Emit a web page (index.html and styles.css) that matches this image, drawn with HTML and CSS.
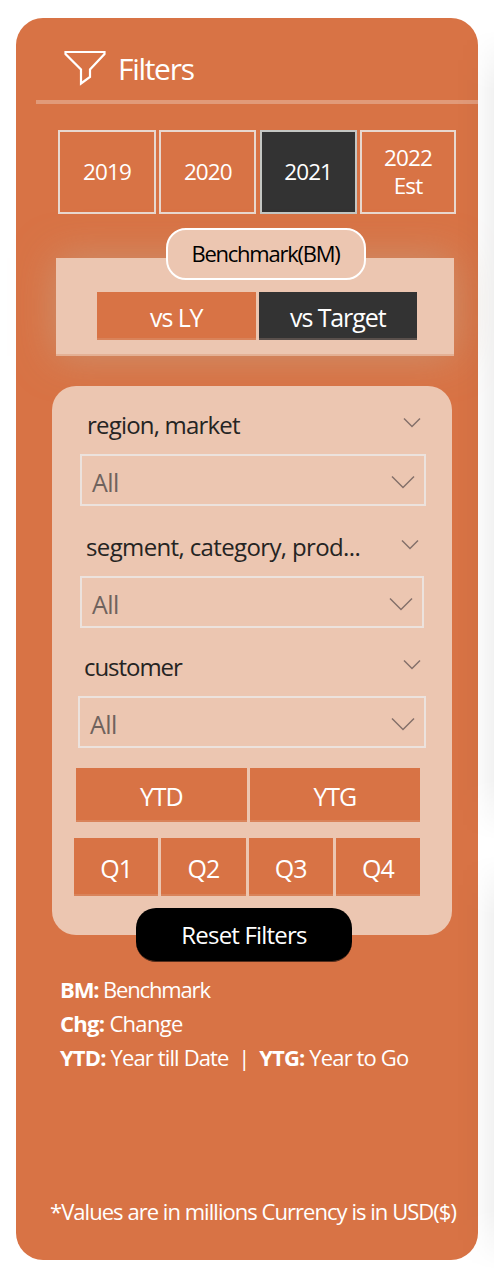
FILE: index.html
```html
<!DOCTYPE html>
<html lang="en">
<head>
<meta charset="utf-8">
<title>Filters</title>
<link rel="stylesheet" href="styles.css">
</head>
<body>
<aside class="panel">
  <header class="head">
    <svg class="funnel" width="44" height="38" viewBox="0 0 44 38"><path d="M2.5 3H41.5V5L27 20.5V28L18 34.5V20.5L2.5 5Z"/></svg>
    <h1 class="title">Filters</h1>
  </header>
  <div class="years">
    <button class="year">2019</button>
    <button class="year">2020</button>
    <button class="year on">2021</button>
    <button class="year">2022<br>Est</button>
  </div>
  <section class="bench">
    <div class="pill"><span>Benchmark(BM)</span></div>
    <div class="pair modes">
      <button class="tile ly">vs LY</button>
      <button class="tile on target">vs Target</button>
    </div>
  </section>
  <section class="card">
    <div class="slicer">
      <div class="label"><span class="region">region, market</span><svg class="chev" width="18" height="11" viewBox="0 0 18 11"><path d="M1 1.5L9 9.5L17 1.5"/></svg></div>
      <div class="select"><span class="all">All</span><svg class="chev" width="26" height="14" viewBox="0 0 26 14"><path d="M2 1.5L13 12.5L24 1.5"/></svg></div>
    </div>
    <div class="slicer second">
      <div class="label"><span class="segment">segment, category, prod...</span><svg class="chev" width="18" height="11" viewBox="0 0 18 11"><path d="M1 1.5L9 9.5L17 1.5"/></svg></div>
      <div class="select"><span class="all">All</span><svg class="chev" width="26" height="14" viewBox="0 0 26 14"><path d="M2 1.5L13 12.5L24 1.5"/></svg></div>
    </div>
    <div class="slicer third">
      <div class="label"><span class="customer">customer</span><svg class="chev" width="18" height="11" viewBox="0 0 18 11"><path d="M1 1.5L9 9.5L17 1.5"/></svg></div>
      <div class="select"><span class="all">All</span><svg class="chev" width="26" height="14" viewBox="0 0 26 14"><path d="M2 1.5L13 12.5L24 1.5"/></svg></div>
    </div>
    <div class="pair periods">
      <button class="tile">YTD</button>
      <button class="tile">YTG</button>
    </div>
    <div class="quarters">
      <button class="tile">Q1</button>
      <button class="tile">Q2</button>
      <button class="tile">Q3</button>
      <button class="tile">Q4</button>
    </div>
    <button class="reset">Reset Filters</button>
  </section>
  <div class="legend">
    <p class="bm"><b>BM:</b> Benchmark</p>
    <p><b>Chg:</b> Change</p>
    <p class="long"><b>YTD:</b> Year till Date&nbsp; |&nbsp; <b>YTG:</b> Year to Go</p>
  </div>
  <footer class="note">*Values are in millions Currency is in USD($)</footer>
</aside>
<div class="shade upper"></div>
<div class="shade lower"></div>
</body>
</html>
```
FILE: styles.css
```css
* { box-sizing: border-box; }
html { overflow: hidden; }
body {
  margin: 0;
  height: 1272px;
  padding: 18px 16px 12px;
  background: #fff;
  font-family: "Open Sans", "Noto Sans", sans-serif;
  overflow: hidden;
  position: relative;
}
button { font: inherit; padding: 0; margin: 0; border: 0; color: #fff; letter-spacing: inherit; }
p, h1 { margin: 0; }
.panel {
  width: 462px;
  height: 1242px;
  border-radius: 27px;
  background: #d87345;
  color: #fff;
  display: flex;
  flex-direction: column;
}
.head {
  margin-left: 20px;
  height: 86px;
  padding: 31px 0 0 27px;
  border-bottom: 4px solid #e19a79;
  display: flex;
  align-items: flex-start;
  gap: 11px;
}
.funnel { fill: none; stroke: #fff; stroke-width: 2.2; flex: none; }
.title { font-size: 30px; line-height: 40px; font-weight: 400; letter-spacing: -1.3px; }
.years {
  margin: 26px 22px 0 42px;
  height: 84px;
  display: grid;
  grid-template-columns: 98px 97px 97px 96px;
  justify-content: space-between;
}
.year {
  background: #d87345;
  border: 2px solid #e8d8cf;
  font-size: 22.5px;
  line-height: 28px;
  letter-spacing: -0.9px;
}
.on { background: #333; }
.year.on { border-color: #c4c6c3; }
.bench {
  margin: 44px 24px 0 40px;
  height: 98px;
  background: #ecc6b1;
  border-bottom: 2px solid #e4b094;
  box-shadow: 0 0 40px rgba(200, 160, 130, .7);
  display: flex;
  flex-direction: column;
  align-items: center;
}
.pill {
  margin-top: -30px;
  width: 200px;
  height: 52px;
  flex: none;
  border: 2px solid #fff;
  border-radius: 20px;
  background: #ecc6b1;
  color: #000;
  font-size: 22px;
  line-height: 46px;
  text-align: center;
  letter-spacing: -1.25px;
  margin-left: 21px;
}
.pair { display: grid; grid-template-columns: 1fr 1fr; gap: 3px; }
.tile {
  background-color: #d87345;
  border-bottom: 2px solid #d9835a;
  padding-top: 4px;
  font-size: 25px;
  line-height: 36px;
  letter-spacing: -0.9px;
}
.tile.on { background: #333; border-color: #5a504c; }
.modes .tile { padding-top: 3px; letter-spacing: -1.1px; }
.modes { margin: 12px 0 0 4px; width: 320px; height: 48px; flex: none; }
.card {
  margin: 30px 26px 0 36px;
  height: 549px;
  flex: none;
  border-radius: 24px;
  background: #ecc6b1;
  padding: 16px 26px 0 28px;
  position: relative;
  display: flex;
  flex-direction: column;
}
.slicer { height: 104px; flex: none; }
.second { margin: 18px 2px 0 0; }
.third { margin: 16px 0 0 -2px; }
.label {
  height: 52px;
  padding: 0 5px 0 6px;
  display: flex;
  justify-content: space-between;
  color: #252423;
  font-size: 24px;
  line-height: 46px;
  letter-spacing: -0.63px;
  white-space: nowrap;
}
.region { letter-spacing: -0.8px; margin-left: 1px; }
.customer { letter-spacing: -1.05px; }
.label .chev { margin-top: 15px; }
.chev { fill: none; stroke: #85706a; stroke-width: 1.5; flex: none; }
.select {
  height: 52px;
  border: 2px solid #ece2dd;
  padding: 0 8px 0 10px;
  display: flex;
  align-items: flex-start;
  justify-content: space-between;
  color: #6f625d;
  font-size: 25px;
  line-height: 53px;
  letter-spacing: -0.5px;
}
.select .chev { margin-top: 19px; }
.periods { margin: 20px 6px 0 -4px; height: 54px; flex: none; }
.periods .tile { letter-spacing: -1.1px; }
.quarters {
  margin: 16px 6px 0 -6px;
  height: 58px;
  flex: none;
  display: grid;
  grid-template-columns: repeat(4, 1fr);
  gap: 3px;
}
.reset {
  margin: 12px 0 0 56px;
  width: 216px;
  height: 54px;
  flex: none;
  border-radius: 20px;
  background: #000;
  border-bottom: 1px solid #542d1c;
  font-size: 24px;
  line-height: 53px;
  letter-spacing: -0.8px;
}
.legend {
  margin: 37px 0 0 44px;
  font-size: 22px;
  line-height: 34px;
  letter-spacing: -0.7px;
  white-space: nowrap;
}
.bm { letter-spacing: -1.15px; }
.long { letter-spacing: -0.86px; }
.note {
  margin: 120px 0 0 34px;
  font-size: 22px;
  line-height: 34px;
  letter-spacing: -0.96px;
  white-space: nowrap;
}
.shade {
  position: absolute;
  right: 0;
  width: 38px;
  background: linear-gradient(to right, rgba(0, 0, 0, 0), rgba(0, 0, 0, .02) 60%, rgba(0, 0, 0, .05));
  -webkit-mask-image: linear-gradient(transparent, #000 60px, #000 calc(100% - 60px), transparent);
  mask-image: linear-gradient(transparent, #000 60px, #000 calc(100% - 60px), transparent);
}
.upper { top: 30px; height: 810px; }
.lower { top: 855px; height: 415px; }
```
